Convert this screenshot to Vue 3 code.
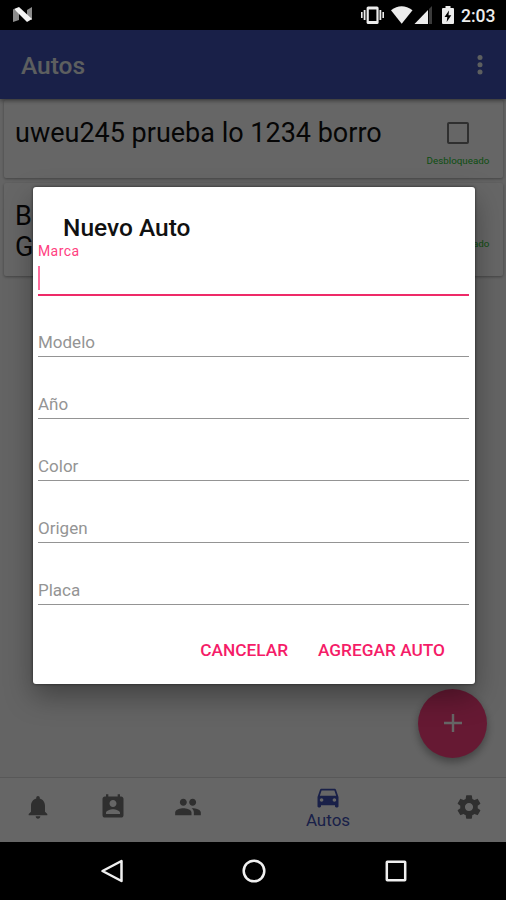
<script setup>
import { ref } from 'vue';

const cars = ref([
  { id: 1, lines: ['uweu245 prueba lo 1234 borro'], status: 'Desbloqueado' },
  { id: 2, lines: ['B', 'G'], status: 'Desbloqueado' }
]);

const fields = ['Marca', 'Modelo', 'Año', 'Color', 'Origen', 'Placa'];
const focused = ref(0);

const navItems = [
  { id: 'alerts', path: 'M12 22c1.1 0 2-.9 2-2h-4c0 1.1.9 2 2 2zm6-6v-5c0-3.07-1.64-5.64-4.5-6.32V4c0-.83-.67-1.5-1.5-1.5s-1.5.67-1.5 1.5v.68C7.63 5.36 6 7.92 6 11v5l-2 2v1h16v-1l-2-2z' },
  { id: 'contacts', path: 'M19 3h-1V1h-2v2H8V1H6v2H5c-1.11 0-2 .9-2 2v14c0 1.1.89 2 2 2h14c1.1 0 2-.9 2-2V5c0-1.1-.9-2-2-2zm-7 3c1.66 0 3 1.34 3 3s-1.34 3-3 3-3-1.34-3-3 1.34-3 3-3zm6 12H6v-1c0-2 4-3.1 6-3.1s6 1.1 6 3.1v1z' },
  { id: 'people', path: 'M16 11c1.66 0 2.99-1.34 2.99-3S17.66 5 16 5c-1.66 0-3 1.34-3 3s1.34 3 3 3zm-8 0c1.66 0 2.99-1.34 2.99-3S9.66 5 8 5C6.34 5 5 6.34 5 8s1.34 3 3 3zm0 2c-2.33 0-7 1.17-7 3.5V19h14v-2.5c0-2.33-4.67-3.5-7-3.5zm8 0c-.29 0-.62.02-.97.05 1.16.84 1.97 1.97 1.97 3.45V19h6v-2.5c0-2.33-4.67-3.5-7-3.5z' },
  { id: 'cars', label: 'Autos', path: 'M18.92 6.01C18.72 5.42 18.16 5 17.5 5h-11c-.66 0-1.21.42-1.42 1.01L3 12v8c0 .55.45 1 1 1h1c.55 0 1-.45 1-1v-1h12v1c0 .55.45 1 1 1h1c.55 0 1-.45 1-1v-8l-2.08-5.99zM6.5 16c-.83 0-1.5-.67-1.5-1.5S5.67 13 6.5 13s1.5.67 1.5 1.5S7.33 16 6.5 16zm11 0c-.83 0-1.5-.67-1.5-1.5s.67-1.5 1.5-1.5 1.5.67 1.5 1.5-.67 1.5-1.5 1.5zM5 11l1.5-4.5h11L19 11H5z' },
  { id: 'settings', path: 'M19.43 12.98c.04-.32.07-.64.07-.98s-.03-.66-.07-.98l2.11-1.65c.19-.15.24-.42.12-.64l-2-3.46c-.12-.22-.39-.3-.61-.22l-2.49 1c-.52-.4-1.08-.73-1.69-.98l-.38-2.65C14.46 2.18 14.25 2 14 2h-4c-.25 0-.46.18-.49.42l-.38 2.65c-.61.25-1.17.59-1.69.98l-2.49-1c-.23-.09-.49 0-.61.22l-2 3.46c-.13.22-.07.49.12.64l2.11 1.65c-.04.32-.07.65-.07.98s.03.66.07.98l-2.11 1.65c-.19.15-.24.42-.12.64l2 3.46c.12.22.39.3.61.22l2.49-1c.52.4 1.08.73 1.69.98l.38 2.65c.03.24.24.42.49.42h4c.25 0 .46-.18.49-.42l.38-2.65c.61-.25 1.17-.59 1.69-.98l2.49 1c.23.09.49 0 .61-.22l2-3.46c.12-.22.07-.49-.12-.64l-2.11-1.65zM12 15.5c-1.93 0-3.5-1.57-3.5-3.5s1.57-3.5 3.5-3.5 3.5 1.57 3.5 3.5-1.57 3.5-3.5 3.5z' }
];
const activeNav = ref('cars');
</script>

<template>
  <div class="phone">
    <header class="status-bar">
      <svg class="n-logo" width="20" height="16" viewBox="0 0 20 16">
        <path d="M0 2L6 5V13L0 15ZM14 3L19 0V13L14 11Z" fill="#8c8c8c" />
        <path d="M1 2L6 0L19 12L14 15Z" fill="#f4f4f4" />
      </svg>
      <svg class="status-icons" width="98" height="20" viewBox="0 0 98 20">
        <g fill="#ececec">
          <path d="M1 7h1.6v6H1zM3.7 5h1.8v10H3.7zM19.5 5h1.8v10h-1.8zM22.4 7H24v6h-1.6z" />
          <rect x="6.6" y="1.5" width="12" height="17.5" rx="1.6" />
          <rect x="8.8" y="4.5" width="7.6" height="11.5" fill="#000" />
          <path d="M31 5.2Q41.5-2.5 52.5 5.2L41.7 18.8Z" />
          <path d="M54.5 19L68 5V19Z" />
          <path d="M69 4L72 1V19H69Z" fill="#3b3b3b" />
          <path d="M85.5 1h5v2H93q1 0 1 1v14q0 1-1 1H83q-1 0-1-1V4q0-1 1-1h2.500z" />
          <path d="M89 5.500L84.500 12H87.300L86.700 17L91.300 10.200H88.500Z" fill="#000" />
        </g>
      </svg>
      <span class="clock">2:03</span>
    </header>

    <div class="app">
      <div class="app-bar">
        <h1>Autos</h1>
        <svg width="8" height="22" viewBox="0 0 8 22" fill="#e8eeee">
          <circle cx="4" cy="3.500" r="2.500" />
          <circle cx="4" cy="10.700" r="2.500" />
          <circle cx="4" cy="17.900" r="2.500" />
        </svg>
      </div>

      <main class="car-list">
        <div v-for="car in cars" :key="car.id" class="car-card" :class="{ tall: car.lines.length > 1 }">
          <div class="car-name">
            <div v-for="line in car.lines" :key="line">{{ line }}</div>
          </div>
          <div class="car-state">
            <div class="checkbox"></div>
            <span>{{ car.status }}</span>
          </div>
        </div>
      </main>

      <nav class="bottom-nav">
        <button
          v-for="item in navItems"
          :key="item.id"
          class="nav-item"
          :class="{ active: activeNav === item.id }"
          @click="activeNav = item.id"
        >
          <svg viewBox="0 0 24 24"><path :d="item.path" /></svg>
          <span v-if="item.label">{{ item.label }}</span>
        </button>
      </nav>

      <button class="fab">
        <svg width="20" height="20" viewBox="0 0 20 20">
          <path d="M10 1V19M1 10H19" stroke="#fff" stroke-width="2.400" />
        </svg>
      </button>
      <div class="scrim"></div>
    </div>

    <footer class="system-nav">
      <svg viewBox="0 0 24 24"><path d="M21.500 2V22L2.500 12Z" /></svg>
      <svg viewBox="0 0 24 24"><circle cx="12" cy="12" r="10.300" /></svg>
      <svg viewBox="0 0 24 24"><rect x="2.800" y="2.800" width="18.400" height="18.400" rx="0.500" /></svg>
    </footer>

    <div class="dialog" role="dialog">
      <h2>Nuevo Auto</h2>
      <div class="fields">
        <div
          v-for="(field, index) in fields"
          :key="field"
          class="field"
          :class="{ focused: focused === index }"
          @click="focused = index"
        >
          <span class="field-label">{{ field }}</span>
          <i v-if="focused === index" class="caret"></i>
        </div>
      </div>
      <div class="actions">
        <button>CANCELAR</button>
        <button>AGREGAR AUTO</button>
      </div>
    </div>
  </div>
</template>

<style>
body {
  margin: 0;
  background: #000;
}
</style>

<style scoped>
.phone {
  position: relative;
  display: flex;
  flex-direction: column;
  width: 506px;
  height: 900px;
  overflow: hidden;
  background: #000;
  font-family: Roboto, "Liberation Sans", sans-serif;
}

.phone * {
  box-sizing: border-box;
}

button {
  border: 0;
  padding: 0;
  background: none;
  font-family: inherit;
}

.status-bar {
  display: flex;
  align-items: center;
  height: 30px;
  padding: 0 10px 0 13px;
  flex-shrink: 0;
}

.status-icons {
  margin-left: auto;
}

.clock {
  width: 35px;
  margin-left: 3px;
  color: #ececec;
  font-size: 17.5px;
  font-weight: 500;
  line-height: 30px;
  padding-top: 1px;
  white-space: nowrap;
}

.app {
  position: relative;
  display: flex;
  flex-direction: column;
  height: 812px;
  background: #fafafa;
}

.app-bar {
  display: flex;
  align-items: center;
  justify-content: space-between;
  height: 69px;
  padding: 0 22px 0 21px;
  background: #3f51b5;
  box-shadow: 0 2px 4px rgba(0, 0, 0, 0.4);
  z-index: 1;
}

.app-bar h1 {
  margin: 2px 0 0;
  color: #e8eeee;
  font-size: 24.5px;
  font-weight: 500;
}

.car-list {
  flex: 1;
  padding: 1px 3px 0 4px;
}

.car-card {
  display: flex;
  justify-content: space-between;
  height: 78px;
  margin-bottom: 5px;
  padding: 0 8px 0 11px;
  background: #fff;
  border-radius: 2px;
  box-shadow: 0 1px 3px rgba(0, 0, 0, 0.35);
}

.car-card.tall {
  height: 93px;
}

.car-name {
  padding-top: 18px;
  font-size: 27px;
  line-height: 31px;
  color: #111;
  white-space: nowrap;
}

.car-state {
  display: flex;
  flex-direction: column;
  align-items: center;
  width: 74px;
  padding-top: 22px;
  color: #1fc42f;
  font-size: 9.8px;
  line-height: 12px;
}

.checkbox {
  width: 22px;
  height: 22px;
  margin-bottom: 11px;
  border: 2px solid #757575;
  border-radius: 2px;
}

.bottom-nav {
  display: flex;
  height: 65px;
  background: #fff;
  border-top: 1px solid #dcdcdc;
}

.nav-item {
  display: flex;
  flex-direction: column;
  align-items: center;
  justify-content: center;
  width: 75px;
  padding-bottom: 7px;
  fill: #757575;
}

.nav-item svg {
  width: 28px;
  height: 28px;
}

.nav-item.active {
  flex: 1;
  justify-content: flex-start;
  padding-top: 5px;
  color: #3f51b5;
  fill: #3f51b5;
  font-size: 17px;
  line-height: 19px;
}

.fab {
  position: absolute;
  left: 418px;
  top: 659px;
  display: flex;
  align-items: center;
  justify-content: center;
  width: 69px;
  height: 69px;
  padding-bottom: 2px;
  border-radius: 50%;
  background: #ff4081;
  box-shadow: 0 4px 8px rgba(0, 0, 0, 0.35);
}

/* Dims everything between the system bars */
.scrim {
  position: absolute;
  inset: 0;
  z-index: 2;
  background: rgba(0, 0, 0, 0.6);
}

.system-nav {
  display: flex;
  align-items: center;
  justify-content: center;
  flex: 1;
  gap: 118px;
  padding-left: 2px;
}

.system-nav svg {
  width: 24px;
  height: 24px;
  fill: none;
  stroke: #f0f0f0;
  stroke-width: 2.5;
  stroke-linejoin: round;
}

.dialog {
  position: absolute;
  left: 33px;
  top: 187px;
  z-index: 3;
  width: 442px;
  height: 497px;
  background: #fff;
  border-radius: 3px;
  box-shadow: 0 0 3px rgba(0, 0, 0, 0.6), 0 12px 28px rgba(0, 0, 0, 0.35);
}

.dialog h2 {
  height: 47px;
  margin: 0;
  padding: 26px 0 0 30px;
  font-size: 24.5px;
  font-weight: 500;
  line-height: 30px;
  color: #111;
}

.fields {
  padding: 0 6px 0 5px;
}

.field {
  display: flex;
  flex-direction: column;
  justify-content: flex-end;
  height: 62px;
  padding-bottom: 4px;
  border-bottom: 1.4px solid #949494;
  color: #949494;
  font-size: 17px;
  line-height: 20px;
}

.field.focused {
  margin-bottom: -1px;
  border-bottom: 2px solid #ee2a68;
  color: #ff4081;
  font-size: 14px;
  letter-spacing: 0.4px;
}

.field.focused .field-label {
  margin-bottom: 7px;
  line-height: 16px;
}

.caret {
  width: 2px;
  height: 24px;
  background: #ff6f9f;
}

.actions {
  display: flex;
  justify-content: flex-end;
  gap: 30px;
  padding: 34px 30px 0 0;
}

.actions button {
  color: #f51c68;
  font-size: 17.3px;
  font-weight: 500;
  line-height: 22px;
}
</style>
